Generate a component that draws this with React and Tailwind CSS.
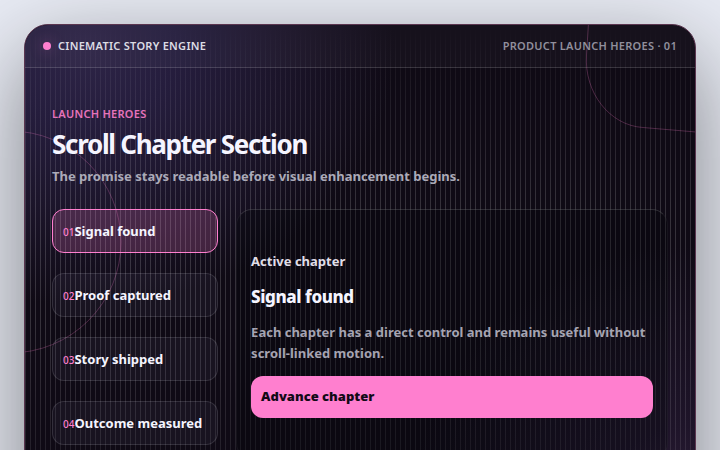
import { useState } from "react";
import clsx from "clsx";

const chapters = [
  { id: "01", title: "Signal found" },
  { id: "02", title: "Proof captured" },
  { id: "03", title: "Story shipped" },
  { id: "04", title: "Outcome measured" },
];

// Stripes, glow and outline shapes behind the content
function Backdrop() {
  return (
    <div className="absolute inset-0 -z-10" aria-hidden="true">
      <div className="absolute inset-0 bg-[radial-gradient(ellipse_310px_260px_at_60px_20px,#2e2547_0%,#251d3d_30%,#1b1429_65%,transparent_100%),radial-gradient(circle_at_100%_510px,#30203a_0px,#1e1429_110px,transparent_290px)]" />
      <div className="absolute inset-0 bg-[repeating-linear-gradient(90deg,rgba(255,255,255,0.16)_0px,rgba(255,255,255,0.16)_1px,transparent_1px,transparent_5px)] [mask-image:linear-gradient(180deg,transparent_0px,rgba(0,0,0,0.35)_50px,black_180px,black_300px,rgba(0,0,0,0.5)_440px)]" />
      <svg
        className="absolute top-0 left-0 h-60 w-full overflow-visible"
        fill="none"
        stroke="#ff7fcf"
        strokeOpacity="0.25"
      >
        <circle cx="-15" cy="217" r="111" />
      </svg>
      <svg
        className="absolute top-0 right-0"
        width="110"
        height="110"
        viewBox="0 0 110 110"
        fill="none"
        stroke="#ff7fcf"
        strokeOpacity="0.25"
      >
        <path d="M3.5 -2L1.5 30C-1 68 25 100.500 58 102.500L111 107" />
      </svg>
    </div>
  );
}

export default function App() {
  const [active, setActive] = useState(0);

  const advance = () => {
    setActive((prev) => (prev + 1) % chapters.length);
  };

  return (
    <main className="h-screen overflow-hidden bg-[#e8ebf4] p-6 font-['Noto_Sans',sans-serif] text-[#f5f5ff]">
      <section className="relative isolate min-h-[560px] overflow-hidden rounded-3xl border border-[#5b3650] bg-[#0f0a15] shadow-[0_30px_90px_rgba(0,0,0,0.46)]">
        <Backdrop />

        <header className="flex h-[43px] items-center justify-between border-b border-white/15 bg-white/3 px-[18px] text-[11px] font-semibold tracking-wide uppercase">
          <div className="flex items-center gap-[7px] text-[#dcdce4]">
            <span className="size-2 rounded-full bg-[#ff7fcf] shadow-[0_0_14px_rgba(255,127,207,0.35)]" />
            Cinematic Story Engine
          </div>
          <span className="text-[#918f9c]">Product Launch Heroes · 01</span>
        </header>

        <div className="px-[27px] pt-[38px]">
          <p className="text-[11px] leading-4 font-semibold tracking-wide text-[#e673bb] uppercase">
            Launch Heroes
          </p>
          <h1 className="mt-[7px] text-[26px] leading-[30px] font-bold tracking-tighter">
            Scroll Chapter Section
          </h1>
          <p className="mt-[7px] text-[13px] leading-5 font-bold text-[#abaab8]">
            The promise stays readable before visual enhancement begins.
          </p>

          <div className="mt-[23px] grid grid-cols-[5fr_13fr] gap-[18px]">
            <nav className="flex flex-col gap-5" aria-label="Chapters">
              {chapters.map((chapter, i) => (
                <button
                  key={chapter.id}
                  type="button"
                  onClick={() => setActive(i)}
                  className={clsx(
                    "flex h-11 items-center rounded-xl border px-2.5 pt-0.5 text-left text-[13px] font-bold whitespace-nowrap",
                    i === active
                      ? "border-[#ff7fcf] bg-[#ff7fcf]/20"
                      : "border-white/12 bg-[#c8c8ff]/5"
                  )}
                >
                  <span className="text-[10px] font-medium text-[#ff7fcf]">
                    {chapter.id}
                  </span>
                  {chapter.title}
                </button>
              ))}
            </nav>

            <article className="rounded-2xl border border-t-white/15 border-x-white/5 border-b-white/5 bg-[#04060b]/30 px-3.5 pt-[41px] pb-10">
              <p className="text-[13px] leading-5 font-bold text-[#e0dfe8]">
                Active chapter
              </p>
              <h2 className="mt-[14px] text-[17px] leading-6 font-extrabold tracking-tight">
                {chapters[active].title}
              </h2>
              <p className="mt-[13px] text-[13px] leading-[21px] font-bold text-[#a5a4b2]">
                Each chapter has a direct control and remains useful without
                scroll-linked motion.
              </p>
              <button
                type="button"
                onClick={advance}
                className="mt-3 h-[42px] w-full rounded-xl bg-[#ff7fcf] px-2.5 text-left text-[13px] font-black text-[#120a16]"
              >
                Advance chapter
              </button>
            </article>
          </div>
        </div>
      </section>
    </main>
  );
}
